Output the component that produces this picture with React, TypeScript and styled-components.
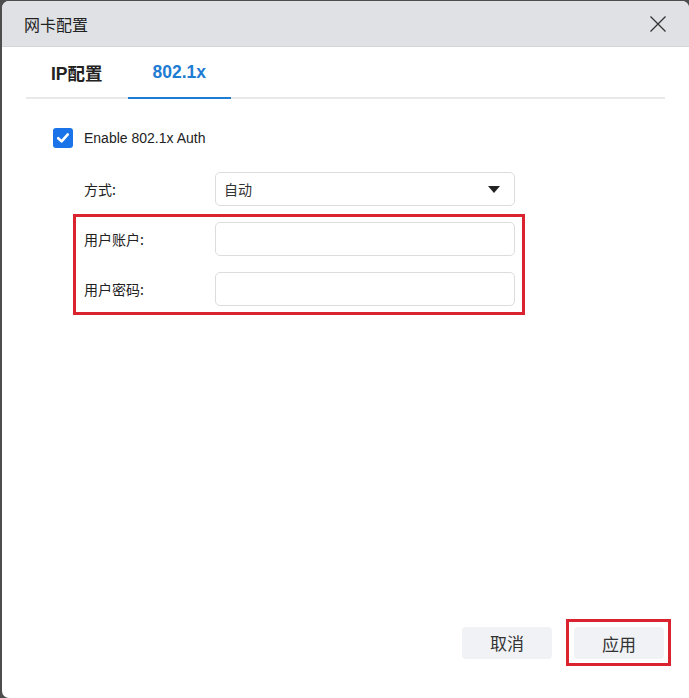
import { useState } from 'react';
import styled, { createGlobalStyle } from "styled-components";

const GlobalStyle = createGlobalStyle`
  html, body {
    margin: 0;
    padding: 0;
    background: #4d4d4d;
  }
  body {
    font-family: "Liberation Sans", "Noto Sans CJK SC", sans-serif;
    color: #333;
  }
`;

const Dialog = styled.div`
  box-sizing: border-box;
  width: 687px;
  height: 697px;
  margin: 1px 0 0 2px;
  background: #fff;
  border-radius: 7px 7px 0 7px;
  overflow: hidden;
  display: flex;
  flex-direction: column;
`;

const Header = styled.div`
  height: 45px;
  background: #dfe1e5;
  border-bottom: 1px solid #d3d5d9;
  display: flex;
  align-items: center;
  justify-content: space-between;
  padding: 0 22px 0 22px;
`;

const Title = styled.div`
  font-family: "Noto Sans CJK SC", sans-serif;
  font-size: 16px;
  color: #222;
`;

const CloseButton = styled.button`
  border: none;
  background: none;
  padding: 0;
  width: 18px;
  height: 18px;
  display: flex;
  cursor: pointer;
`;

const TabBar = styled.div`
  margin: 0 24px;
  display: flex;
  height: 50px;
  border-bottom: 2px solid #e8e9eb;
`;

const Tab = styled.div<{ active?: boolean }>`
  padding: 0 25px;
  display: flex;
  align-items: center;
  font-family: "Liberation Sans", "Noto Sans CJK SC", sans-serif;
  font-size: 17.5px;
  font-weight: bold;
  color: ${props => props.active ? "#1f7cd3" : "#222"};
  margin-bottom: -2px;
  border-bottom: 2px solid ${props => props.active ? "#1f7cd3" : "transparent"};
  cursor: pointer;
`;

const Body = styled.div`
  flex: 1;
  padding: 29px 0 0 51px;
`;

const CheckRow = styled.label`
  display: flex;
  align-items: center;
  gap: 11px;
  font-size: 14px;
  color: #222;
  cursor: pointer;
`;

const Box = styled.span<{ checked: boolean }>`
  width: 20px;
  height: 20px;
  border-radius: 3px;
  box-sizing: border-box;
  background: ${props => props.checked ? "#1a73e8" : "#fff"};
  border: ${props => props.checked ? "none" : "1px solid #aaa"};
  display: flex;
  align-items: center;
  justify-content: center;
`;

const Form = styled.div`
  margin: 24px 0 0 31px;
  display: flex;
  flex-direction: column;
`;

const Row = styled.div`
  display: flex;
  align-items: center;
  height: 34px;
  & + & {
    margin-top: 16px;
  }
`;

const Label = styled.div`
  width: 131px;
  font-family: "Noto Sans CJK SC", sans-serif;
  font-size: 14px;
  color: #222;
`;

const Field = styled.input`
  box-sizing: border-box;
  width: 300px;
  height: 34px;
  border: 1px solid #dcdcdc;
  border-radius: 5px;
  padding: 0 8px;
  font-size: 14px;
  outline: none;
`;

const Select = styled.div`
  box-sizing: border-box;
  width: 300px;
  height: 34px;
  border: 1px solid #dcdcdc;
  border-radius: 5px;
  padding: 0 14px 0 8px;
  display: flex;
  align-items: center;
  justify-content: space-between;
  font-family: "Noto Sans CJK SC", sans-serif;
  font-size: 14px;
  color: #333;
`;

const Highlight = styled.div`
  width: fit-content;
  margin: 8px 0 0 -11px;
  padding: 5px 7px 6px 8px;
  border: 3px solid #d9232e;
  display: flex;
  flex-direction: column;
`;

const Footer = styled.div`
  display: flex;
  justify-content: flex-end;
  align-items: center;
  gap: 14px;
  padding: 0 18px 32px 0;
`;

const Mark = styled.div`
  border: 3px solid #d9232e;
  padding: 5px 4px 4px 5px;
  display: flex;
`;

const Button = styled.button`
  width: 90px;
  height: 32px;
  border: none;
  border-radius: 4px;
  background: #f0f2f5;
  font-family: "Noto Sans CJK SC", sans-serif;
  font-size: 17px;
  color: #333;
  cursor: pointer;
`;

const App: React.FC = () => {
  const [tab, setTab] = useState(1);
  const [enabled, setEnabled] = useState(true);
  const [user, setUser] = useState("");
  const [pass, setPass] = useState("");

  return (
    <>
      <GlobalStyle />
      <Dialog>
        <Header>
          <Title>网卡配置</Title>
          <CloseButton>
            <svg width="18" height="18" viewBox="0 0 18 18">
              <path d="M1.5 1.5 L16.5 16.5 M16.5 1.5 L1.5 16.5" stroke="#333" strokeWidth="1.3" fill="none" />
            </svg>
          </CloseButton>
        </Header>
        <TabBar>
          <Tab active={tab === 0} onClick={() => setTab(0)}>IP配置</Tab>
          <Tab active={tab === 1} onClick={() => setTab(1)}>802.1x</Tab>
        </TabBar>
        <Body>
          <CheckRow onClick={() => setEnabled(!enabled)}>
            <Box checked={enabled}>
              {enabled && (
                <svg width="14" height="14" viewBox="0 0 14 14">
                  <path d="M2.2 7.2 L5.6 10.4 L11.8 3.4" stroke="#fff" strokeWidth="2.6" fill="none" strokeLinecap="round" strokeLinejoin="round" />
                </svg>
              )}
            </Box>
            Enable 802.1x Auth
          </CheckRow>
          <Form>
            <Row>
              <Label>方式:</Label>
              <Select>
                自动
                <svg width="12" height="7" viewBox="0 0 12 7">
                  <path d="M0 0 L12 0 L6 7 Z" fill="#222" />
                </svg>
              </Select>
            </Row>
            <Highlight>
              <Row>
                <Label>用户账户:</Label>
                <Field value={user} onChange={(e) => setUser(e.target.value)} />
              </Row>
              <Row>
                <Label>用户密码:</Label>
                <Field type="password" value={pass} onChange={(e) => setPass(e.target.value)} />
              </Row>
            </Highlight>
          </Form>
        </Body>
        <Footer>
          <Button>取消</Button>
          <Mark>
            <Button>应用</Button>
          </Mark>
        </Footer>
      </Dialog>
    </>
  );
}

export default App;
